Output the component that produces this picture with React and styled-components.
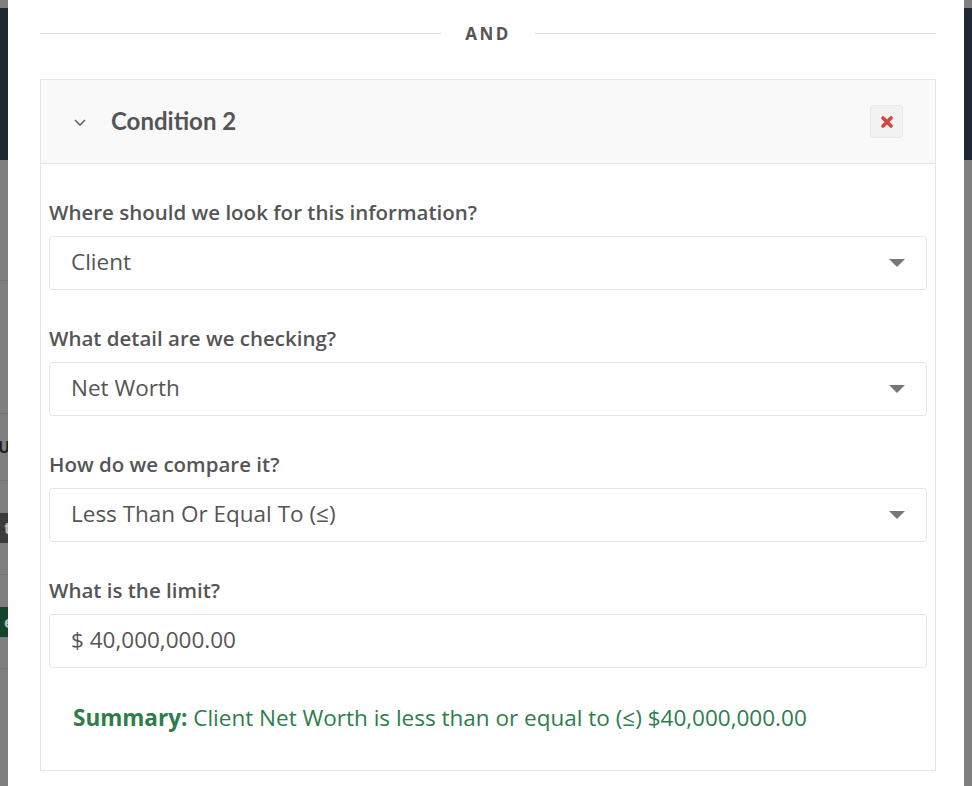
import React from 'react';
import styled, { createGlobalStyle } from 'styled-components';

const GlobalStyle = createGlobalStyle`
  html, body {
    margin: 0;
    padding: 0;
    background: #7f7f7f;
  }
  body {
    font-family: "Open Sans", "Liberation Sans", sans-serif;
    color: #555;
  }
`;

const Page = styled.div`
  display: flex;
  width: 972px;
  height: 786px;
  overflow: hidden;
`;

const Backdrop = styled.div`
  width: 8px;
  flex-shrink: 0;
  display: flex;
  flex-direction: column;
  background: #7f7f7f;

  .navbar {
    height: 152px;
    margin-top: 8px;
    background: #1f2731;
  }
`;

const BackdropRow = styled.div`
  height: ${(props) => props.h}px;
  border-bottom: 1px solid #737373;
  display: flex;
  align-items: center;
  overflow: hidden;
  font-weight: 700;
  font-size: 16px;

  span {
    display: block;
    height: 30px;
    line-height: 30px;
    padding: 0 4px;
    background: ${(props) => props.tone || 'transparent'};
    color: ${(props) => (props.tone ? '#bbb' : '#222')};
  }
`;

const Modal = styled.div`
  flex: 1;
  background: #fff;
  padding: 0 28px 0 32px;
  display: flex;
  flex-direction: column;
`;

const Divider = styled.div`
  display: flex;
  align-items: center;
  gap: 24px;
  height: 79px;
  padding-bottom: 13px;
  box-sizing: border-box;

  &::before,
  &::after {
    content: '';
    flex: 1;
    height: 1px;
    background: #dedede;
  }

  span {
    font-size: 17px;
    font-weight: 700;
    letter-spacing: 2.5px;
    color: #555;
  }
`;

const Card = styled.div`
  border: 1px solid #e6e6e6;
  display: flex;
  flex-direction: column;
`;

const CardHeader = styled.div`
  height: 83px;
  background: #f9f9f9;
  border-bottom: 1px solid #e6e6e6;
  display: flex;
  align-items: center;
  padding: 0 32px;
`;

const Chevron = styled.svg`
  width: 14px;
  height: 14px;
  margin-right: 24px;
  color: #666;
`;

const Title = styled.h3`
  margin: 0 0 3px;
  flex: 1;
  font-family: "Lato", "Open Sans", sans-serif;
  font-size: 24px;
  font-weight: 700;
  color: #555;
`;

const RemoveButton = styled.button`
  width: 33px;
  height: 33px;
  padding: 0;
  border: 1px solid #e8e8e8;
  border-radius: 3px;
  background: #f2f2f2;
  display: flex;
  align-items: center;
  justify-content: center;
  cursor: pointer;
`;

const CardBody = styled.div`
  padding: 34px 8px 37px;
  display: flex;
  flex-direction: column;
`;

const Field = styled.div`
  display: flex;
  flex-direction: column;
  margin-bottom: 34px;
`;

const Label = styled.label`
  font-size: 20.5px;
  font-weight: 600;
  color: #555;
  line-height: 28px;
  margin-bottom: 10px;
`;

const Box = styled.div`
  height: 54px;
  box-sizing: border-box;
  border: 1px solid #e4e4e4;
  border-radius: 4px;
  display: flex;
  align-items: center;
  padding: 0 21px 3px;
  font-size: 22.5px;
  color: #555;

  span {
    flex: 1;
  }
`;

const Caret = styled.i`
  width: 0;
  height: 0;
  margin-top: 3px;
  border-left: 8px solid transparent;
  border-right: 8px solid transparent;
  border-top: 8px solid #777;
`;

const Summary = styled.p`
  margin: 1px 0 0 24px;
  font-size: 22.5px;
  line-height: 30px;
  color: #2e7d4b;

  b {
    font-weight: 700;
  }
`;

const fields = [
  { label: 'Where should we look for this information?', value: 'Client', select: true },
  { label: 'What detail are we checking?', value: 'Net Worth', select: true },
  { label: 'How do we compare it?', value: 'Less Than Or Equal To (≤)', select: true },
  { label: 'What is the limit?', value: '$ 40,000,000.00', select: false },
];

function App() {
  return (
    <>
      <GlobalStyle />
      <Page>
        <Backdrop>
          <div className="navbar" />
          <BackdropRow h={120} />
          <BackdropRow h={132} />
          <BackdropRow h={66}>
            <span style={{ marginLeft: -6 }}>U</span>
          </BackdropRow>
          <BackdropRow h={93} tone="#3c3c3c">
            <span>t</span>
          </BackdropRow>
          <BackdropRow h={93} tone="#14452a">
            <span>e</span>
          </BackdropRow>
        </Backdrop>
        <Modal>
          <Divider>
            <span>AND</span>
          </Divider>
          <Card>
            <CardHeader>
              <Chevron viewBox="0 0 14 14" fill="none">
                <path d="M2 5l5 5 5-5" stroke="currentColor" strokeWidth="1.6" />
              </Chevron>
              <Title>Condition 2</Title>
              <RemoveButton>
                <svg width="14" height="14" viewBox="0 0 14 14">
                  <path d="M3 3l8 8M11 3l-8 8" stroke="#d2463b" strokeWidth="3.6" strokeLinecap="round" />
                </svg>
              </RemoveButton>
            </CardHeader>
            <CardBody>
              {fields.map((field) => (
                <Field key={field.label}>
                  <Label>{field.label}</Label>
                  <Box>
                    <span>{field.value}</span>
                    {field.select && <Caret />}
                  </Box>
                </Field>
              ))}
              <Summary>
                <b>Summary:</b> Client Net Worth is less than or equal to (≤) $40,000,000.00
              </Summary>
            </CardBody>
          </Card>
        </Modal>
        <Backdrop>
          <div className="navbar" />
        </Backdrop>
      </Page>
    </>
  );
}

export default App;
